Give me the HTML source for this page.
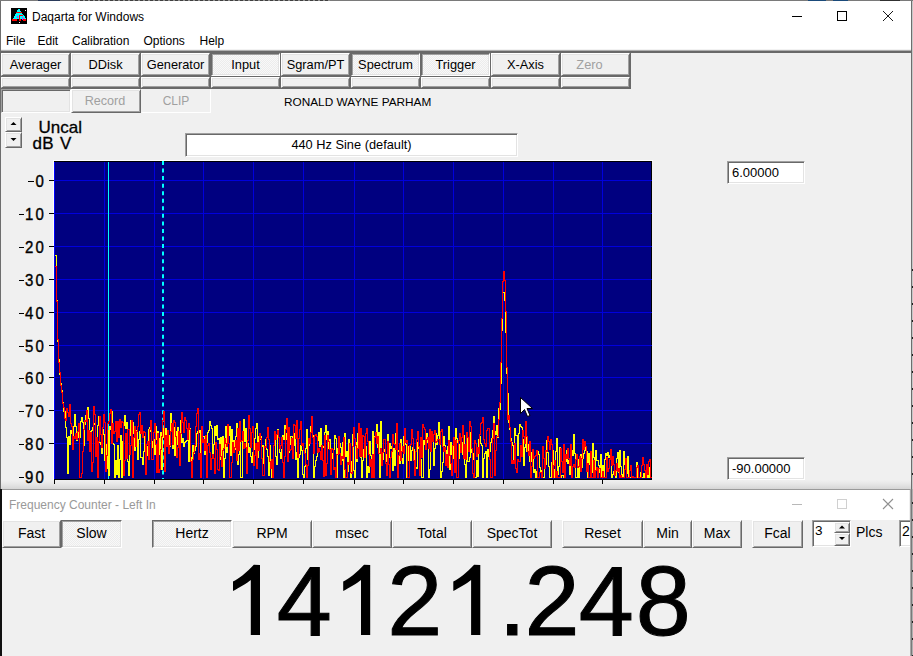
<!DOCTYPE html>
<html><head><meta charset="utf-8">
<style>
*{box-sizing:border-box;margin:0;padding:0}
html,body{width:913px;height:656px;overflow:hidden;background:#f0f0f0}
body{position:relative;font-family:"Liberation Sans",sans-serif;color:#000}
.a{position:absolute}
.t{position:absolute;white-space:nowrap;font-size:12px;line-height:14px}
/* raised button */
.btn{position:absolute;background:#f0f0f0;border-style:solid;border-width:1px;border-color:#fff #696969 #696969 #fff;box-shadow:inset 1px 1px #e3e3e3,inset -1px -1px #a0a0a0;text-align:center;font-size:12px;white-space:nowrap}
.prs{position:absolute;border-style:solid;border-width:1px;border-color:#696969 #fff #fff #696969;box-shadow:inset 1px 1px #a0a0a0,inset -1px -1px #e3e3e3;text-align:center;font-size:12px;white-space:nowrap;
 background-color:#f8f8f8;background-image:linear-gradient(45deg,#ececec 25%,transparent 25%,transparent 75%,#ececec 75%),linear-gradient(45deg,#ececec 25%,transparent 25%,transparent 75%,#ececec 75%);background-size:2px 2px;background-position:0 0,1px 1px}
.sunk{position:absolute;border-style:solid;border-width:1px;border-color:#a0a0a0 #fff #fff #a0a0a0;box-shadow:inset 1px 1px #696969,inset -1px -1px #e3e3e3;background:#fff}
.ylab{position:absolute;left:0;width:46px;text-align:right;font-size:15px;line-height:18px;-webkit-text-stroke:0.35px #000;letter-spacing:2.2px;transform-origin:0 50%;transform:scaleY(1.13)}
.dash{position:absolute;width:6px;height:1px;background:#000}
</style></head><body>

<!-- top strip (window behind) -->
<div class="a" style="left:0;top:0;width:913px;height:1px;background:#7a7a7a"></div>
<div class="a" style="left:38px;top:0;width:22px;height:1px;background:#2a3a5a"></div>
<div class="a" style="left:75px;top:0;width:255px;height:1px;background:repeating-linear-gradient(90deg,#404040 0px,#404040 3px,#909090 3px,#909090 5px)"></div>
<div class="a" style="left:808px;top:0;width:18px;height:1px;background:#1a4a7a"></div>
<div class="a" style="left:833px;top:0;width:15px;height:1px;background:#1a4a7a"></div>
<div class="a" style="left:880px;top:0;width:20px;height:1px;background:#303030"></div>

<!-- main window frame -->
<div class="a" style="left:0;top:1px;width:1px;height:488px;background:#6e6e6e"></div>
<div class="a" style="left:911px;top:1px;width:1px;height:488px;background:#6e6e6e"></div>
<div class="a" style="left:912px;top:1px;width:1px;height:488px;background:#c8c8c8"></div>
<div class="a" style="left:912px;top:255px;width:1px;height:234px;background:repeating-linear-gradient(#c8c8c8 0px,#c8c8c8 14px,#202020 14px,#202020 16px,#c8c8c8 16px,#c8c8c8 17px)"></div>

<div class="a" style="left:1px;top:480px;width:910px;height:9px;background:linear-gradient(#f0f0f0,#e8e8e8 40%,#d6d6d6)"></div>
<!-- title bar + menu -->
<div class="a" style="left:1px;top:1px;width:910px;height:49px;background:#fff"></div>
<svg class="a" style="left:11px;top:8px" width="16" height="16" viewBox="0 0 16 16" shape-rendering="crispEdges"><rect width="16" height="16" fill="#000"/><rect x="7" y="1" width="2" height="1" fill="#00ffff"/><rect x="6" y="2" width="3" height="1" fill="#00ffff"/><rect x="14" y="2" width="1" height="1" fill="#ffffff"/><rect x="6" y="3" width="4" height="1" fill="#00ffff"/><rect x="5" y="4" width="6" height="1" fill="#ff0000"/><rect x="5" y="5" width="6" height="1" fill="#00ffff"/><rect x="4" y="6" width="8" height="1" fill="#00ffff"/><rect x="4" y="7" width="4" height="1" fill="#00ffff"/><rect x="8" y="7" width="4" height="1" fill="#ff0000"/><rect x="12" y="7" width="1" height="1" fill="#00ffff"/><rect x="3" y="8" width="3" height="1" fill="#00ffff"/><rect x="6" y="8" width="1" height="1" fill="#ff00ff"/><rect x="7" y="8" width="1" height="1" fill="#00ffff"/><rect x="8" y="8" width="1" height="1" fill="#ff0000"/><rect x="9" y="8" width="5" height="1" fill="#00ffff"/><rect x="3" y="9" width="3" height="1" fill="#00ffff"/><rect x="6" y="9" width="1" height="1" fill="#ff00ff"/><rect x="7" y="9" width="1" height="1" fill="#00ffff"/><rect x="8" y="9" width="1" height="1" fill="#ff0000"/><rect x="9" y="9" width="2" height="1" fill="#00ffff"/><rect x="11" y="9" width="1" height="1" fill="#ff00ff"/><rect x="12" y="9" width="2" height="1" fill="#00ffff"/><rect x="2" y="10" width="6" height="1" fill="#00ffff"/><rect x="8" y="10" width="1" height="1" fill="#ff0000"/><rect x="9" y="10" width="3" height="1" fill="#00ffff"/><rect x="12" y="10" width="1" height="1" fill="#ff00ff"/><rect x="13" y="10" width="2" height="1" fill="#00ffff"/><rect x="1" y="11" width="5" height="1" fill="#ff0000"/><rect x="8" y="11" width="2" height="1" fill="#ff0000"/><rect x="11" y="11" width="1" height="1" fill="#ff00ff"/><rect x="12" y="11" width="3" height="1" fill="#ff0000"/><rect x="1" y="12" width="5" height="1" fill="#ff0000"/><rect x="8" y="12" width="2" height="1" fill="#ff0000"/><rect x="12" y="12" width="3" height="1" fill="#ff0000"/><rect x="8" y="14" width="1" height="1" fill="#ffffff"/></svg>
<div class="t" style="left:32px;top:10px;font-size:12px;color:#000">Daqarta for Windows</div>
<div class="a" style="left:792px;top:16px;width:10px;height:1px;background:#000"></div>
<div class="a" style="left:837px;top:11px;width:10px;height:10px;border:1px solid #000"></div>
<svg class="a" style="left:882px;top:10px" width="12" height="12" viewBox="0 0 12 12"><path d="M1 1L11 11M11 1L1 11" stroke="#000" stroke-width="0.9"/></svg>

<div class="t" style="left:6px;top:33.5px">File</div>
<div class="t" style="left:37.5px;top:33.5px">Edit</div>
<div class="t" style="left:72px;top:33.5px">Calibration</div>
<div class="t" style="left:143.5px;top:33.5px">Options</div>
<div class="t" style="left:199.5px;top:33.5px">Help</div>

<div class="a" style="left:1px;top:49px;width:910px;height:1px;background:#f2f2f2"></div>
<div class="a" style="left:1px;top:50px;width:910px;height:1px;background:#b0b0b0"></div>
<div class="a" style="left:1px;top:51px;width:910px;height:2px;background:#696969"></div>

<!-- toolbar -->
<div class="a" style="left:0;top:52px;width:631px;height:37px;background:#696969"></div>
<div class="btn" style="left:1px;top:53px;width:69px;height:23px;line-height:22px;font-size:12.8px">Averager</div>
<div class="btn" style="left:71px;top:53px;width:69px;height:23px;line-height:22px;font-size:12.8px">DDisk</div>
<div class="btn" style="left:141px;top:53px;width:69px;height:23px;line-height:22px;font-size:12.8px">Generator</div>
<div class="prs" style="left:211px;top:53px;width:69px;height:23px;line-height:22px;font-size:12.8px">Input</div>
<div class="btn" style="left:281px;top:53px;width:69px;height:23px;line-height:22px;font-size:12.8px">Sgram/PT</div>
<div class="prs" style="left:351px;top:53px;width:69px;height:23px;line-height:22px;font-size:12.8px">Spectrum</div>
<div class="prs" style="left:421px;top:53px;width:69px;height:23px;line-height:22px;font-size:12.8px">Trigger</div>
<div class="btn" style="left:491px;top:53px;width:69px;height:23px;line-height:22px;font-size:12.8px">X-Axis</div>
<div class="btn" style="left:561px;top:53px;width:69px;height:23px;line-height:22px;font-size:12.8px;color:#a0a0a0;padding-right:12px">Zero</div>

<div class="btn" style="left:1px;top:77px;width:69px;height:11px"></div>
<div class="btn" style="left:71px;top:77px;width:69px;height:11px"></div>
<div class="btn" style="left:141px;top:77px;width:69px;height:11px"></div>
<div class="btn" style="left:211px;top:77px;width:69px;height:11px"></div>
<div class="btn" style="left:281px;top:77px;width:69px;height:11px"></div>
<div class="btn" style="left:351px;top:77px;width:69px;height:11px"></div>
<div class="btn" style="left:421px;top:77px;width:69px;height:11px"></div>
<div class="btn" style="left:491px;top:77px;width:69px;height:11px"></div>
<div class="btn" style="left:561px;top:77px;width:69px;height:11px"></div>

<!-- row 3 -->
<div class="a" style="left:1px;top:89px;width:70px;height:24px;border-style:solid;border-width:1px;border-color:#a0a0a0 #fff #fff #a0a0a0;box-shadow:inset 1px 1px #696969,inset -1px -1px #e3e3e3;background:#f0f0f0"></div>
<div class="btn" style="left:71px;top:89px;width:70px;height:24px;line-height:22px;color:#a0a0a0;font-size:12.6px;padding-right:2px">Record</div>
<div class="a" style="left:141px;top:89px;width:70px;height:24px;border-style:solid;border-width:1px;border-color:#f0f0f0 #fff #fff #f0f0f0;text-align:center;line-height:22px;font-size:12px;color:#a0a0a0">CLIP</div>
<div class="t" style="left:284px;top:94.5px;font-size:11.8px">RONALD WAYNE PARHAM</div>

<!-- spin + units -->
<div class="btn" style="left:5px;top:117px;width:17px;height:15px"></div>
<div class="btn" style="left:5px;top:132px;width:17px;height:16px"></div>
<svg class="a" style="left:5px;top:117px" width="17" height="31"><path d="M8.5 5L11.5 8H5.5Z" fill="#000"/><path d="M5.5 21H11.5L8.5 24Z" fill="#000"/></svg>
<div class="t" style="left:38.5px;top:119px;font-size:17px;line-height:18px;-webkit-text-stroke:0.3px #000;letter-spacing:0px">Uncal</div>
<div class="t" style="left:32.5px;top:135px;font-size:17px;line-height:18px;-webkit-text-stroke:0.3px #000;letter-spacing:0.3px;word-spacing:1px">dB V</div>

<!-- signal name box -->
<div class="sunk" style="left:185px;top:133px;width:333px;height:24px;text-align:center;line-height:21px;font-size:12.8px">440 Hz Sine (default)</div>

<!-- plot -->
<div class="a" style="left:53px;top:160px;width:600px;height:1px;background:#fff"></div>
<div class="a" style="left:53px;top:160px;width:1px;height:320px;background:#fff"></div>
<svg class="a" style="left:0;top:0" width="913" height="500" viewBox="0 0 913 500">
 <rect x="54" y="161" width="598" height="318" fill="#000080"/>
 <rect x="54" y="161" width="598" height="1" fill="#000"/>
 <rect x="54" y="162" width="1" height="317" fill="#0000ff"/>
 <rect x="651" y="161" width="1" height="318" fill="#000"/>
 <g stroke="#0000dc" stroke-width="1"><line x1="104.5" y1="162" x2="104.5" y2="479" /><line x1="154.5" y1="162" x2="154.5" y2="479" /><line x1="203.5" y1="162" x2="203.5" y2="479" /><line x1="253.5" y1="162" x2="253.5" y2="479" /><line x1="303.5" y1="162" x2="303.5" y2="479" /><line x1="354.5" y1="162" x2="354.5" y2="479" /><line x1="403.5" y1="162" x2="403.5" y2="479" /><line x1="453.5" y1="162" x2="453.5" y2="479" /><line x1="503.5" y1="162" x2="503.5" y2="479" /><line x1="553.5" y1="162" x2="553.5" y2="479" /><line x1="602.5" y1="162" x2="602.5" y2="479" /><line x1="55" y1="180.5" x2="652" y2="180.5" /><line x1="55" y1="213.5" x2="652" y2="213.5" /><line x1="55" y1="246.5" x2="652" y2="246.5" /><line x1="55" y1="279.5" x2="652" y2="279.5" /><line x1="55" y1="312.5" x2="652" y2="312.5" /><line x1="55" y1="345.5" x2="652" y2="345.5" /><line x1="55" y1="377.5" x2="652" y2="377.5" /><line x1="55" y1="410.5" x2="652" y2="410.5" /><line x1="55" y1="443.5" x2="652" y2="443.5" /></g>
 <line x1="108.5" y1="162" x2="108.5" y2="479" stroke="#00ffff" stroke-width="1"/>
 <line x1="163" y1="161" x2="163" y2="479" stroke="#00ffff" stroke-width="2" stroke-dasharray="4,3.55"/>
 <path d="M55 255h1V256h-1ZM56 255h1V301h-1ZM57 300h1V342h-1ZM58 341h1V360h-1ZM59 359h1V375h-1ZM60 374h1V384h-1ZM61 383h1V391h-1ZM62 390h1V403h-1ZM63 402h1V412h-1ZM64 411h1V412h-1ZM65 411h1V428h-1ZM66 427h1V438h-1ZM67 437h1V474h-1ZM68 436h1V474h-1ZM69 436h1V445h-1ZM70 430h1V445h-1ZM71 430h1V434h-1ZM72 433h1V439h-1ZM73 426h1V439h-1ZM74 414h1V427h-1ZM75 414h1V427h-1ZM76 426h1V441h-1ZM77 437h1V441h-1ZM78 431h1V438h-1ZM79 431h1V438h-1ZM80 421h1V438h-1ZM81 417h1V422h-1ZM82 417h1V423h-1ZM83 422h1V446h-1ZM84 424h1V446h-1ZM85 415h1V425h-1ZM86 412h1V416h-1ZM87 407h1V413h-1ZM88 407h1V419h-1ZM89 418h1V432h-1ZM90 431h1V449h-1ZM91 430h1V449h-1ZM92 427h1V431h-1ZM93 424h1V428h-1ZM94 423h1V425h-1ZM95 423h1V444h-1ZM96 437h1V444h-1ZM97 425h1V438h-1ZM98 416h1V426h-1ZM99 416h1V443h-1ZM100 442h1V445h-1ZM101 444h1V454h-1ZM102 429h1V454h-1ZM103 429h1V435h-1ZM104 434h1V461h-1ZM105 444h1V461h-1ZM106 444h1V469h-1ZM107 430h1V469h-1ZM108 430h1V476h-1ZM109 426h1V476h-1ZM110 426h1V430h-1ZM111 411h1V430h-1ZM112 411h1V444h-1ZM113 443h1V445h-1ZM114 444h1V478h-1ZM115 460h1V478h-1ZM116 460h1V475h-1ZM117 445h1V475h-1ZM118 445h1V478h-1ZM119 459h1V478h-1ZM120 435h1V460h-1ZM121 435h1V478h-1ZM122 441h1V478h-1ZM123 425h1V442h-1ZM124 415h1V426h-1ZM125 415h1V429h-1ZM126 422h1V429h-1ZM127 422h1V462h-1ZM128 461h1V476h-1ZM129 435h1V476h-1ZM130 420h1V436h-1ZM131 420h1V433h-1ZM132 422h1V433h-1ZM133 422h1V434h-1ZM134 433h1V451h-1ZM135 430h1V451h-1ZM136 430h1V432h-1ZM137 431h1V460h-1ZM138 439h1V460h-1ZM139 431h1V440h-1ZM140 431h1V458h-1ZM141 457h1V458h-1ZM142 457h1V465h-1ZM143 451h1V465h-1ZM144 436h1V452h-1ZM145 436h1V445h-1ZM146 444h1V456h-1ZM147 446h1V456h-1ZM148 429h1V447h-1ZM149 427h1V430h-1ZM150 427h1V432h-1ZM151 431h1V448h-1ZM152 441h1V448h-1ZM153 439h1V442h-1ZM154 439h1V455h-1ZM155 426h1V455h-1ZM156 426h1V440h-1ZM157 431h1V440h-1ZM158 431h1V439h-1ZM159 438h1V455h-1ZM160 432h1V455h-1ZM161 432h1V470h-1ZM162 428h1V470h-1ZM163 428h1V438h-1ZM164 437h1V440h-1ZM165 428h1V440h-1ZM166 428h1V438h-1ZM167 436h1V438h-1ZM168 435h1V437h-1ZM169 435h1V447h-1ZM170 413h1V447h-1ZM171 413h1V428h-1ZM172 427h1V449h-1ZM173 427h1V449h-1ZM174 427h1V456h-1ZM175 431h1V456h-1ZM176 431h1V445h-1ZM177 427h1V445h-1ZM178 427h1V434h-1ZM179 433h1V435h-1ZM180 420h1V435h-1ZM181 420h1V443h-1ZM182 438h1V443h-1ZM183 438h1V447h-1ZM184 442h1V447h-1ZM185 441h1V443h-1ZM186 440h1V442h-1ZM187 432h1V441h-1ZM188 432h1V462h-1ZM189 428h1V462h-1ZM190 428h1V458h-1ZM191 457h1V464h-1ZM192 445h1V464h-1ZM193 445h1V454h-1ZM194 450h1V454h-1ZM195 446h1V451h-1ZM196 433h1V447h-1ZM197 431h1V434h-1ZM198 431h1V433h-1ZM199 430h1V433h-1ZM200 430h1V474h-1ZM201 442h1V474h-1ZM202 436h1V443h-1ZM203 436h1V437h-1ZM204 436h1V455h-1ZM205 442h1V455h-1ZM206 442h1V443h-1ZM207 432h1V443h-1ZM208 430h1V433h-1ZM209 421h1V431h-1ZM210 421h1V426h-1ZM211 425h1V429h-1ZM212 428h1V457h-1ZM213 444h1V457h-1ZM214 426h1V445h-1ZM215 426h1V436h-1ZM216 425h1V436h-1ZM217 425h1V440h-1ZM218 438h1V440h-1ZM219 438h1V460h-1ZM220 437h1V460h-1ZM221 437h1V459h-1ZM222 436h1V459h-1ZM223 436h1V478h-1ZM224 458h1V478h-1ZM225 426h1V459h-1ZM226 426h1V453h-1ZM227 436h1V453h-1ZM228 435h1V437h-1ZM229 426h1V436h-1ZM230 426h1V456h-1ZM231 429h1V456h-1ZM232 429h1V450h-1ZM233 440h1V450h-1ZM234 440h1V450h-1ZM235 436h1V450h-1ZM236 423h1V437h-1ZM237 423h1V465h-1ZM238 454h1V465h-1ZM239 433h1V455h-1ZM240 433h1V478h-1ZM241 477h1V478h-1ZM242 439h1V478h-1ZM243 419h1V440h-1ZM244 419h1V442h-1ZM245 428h1V442h-1ZM246 428h1V450h-1ZM247 443h1V450h-1ZM248 443h1V453h-1ZM249 447h1V453h-1ZM250 447h1V457h-1ZM251 456h1V463h-1ZM252 452h1V463h-1ZM253 449h1V453h-1ZM254 438h1V450h-1ZM255 428h1V439h-1ZM256 423h1V429h-1ZM257 423h1V458h-1ZM258 436h1V458h-1ZM259 436h1V440h-1ZM260 436h1V440h-1ZM261 436h1V447h-1ZM262 445h1V447h-1ZM263 445h1V464h-1ZM264 446h1V464h-1ZM265 439h1V447h-1ZM266 439h1V450h-1ZM267 449h1V457h-1ZM268 456h1V476h-1ZM269 445h1V476h-1ZM270 445h1V468h-1ZM271 467h1V478h-1ZM272 477h1V478h-1ZM273 445h1V478h-1ZM274 440h1V446h-1ZM275 440h1V457h-1ZM276 456h1V465h-1ZM277 429h1V465h-1ZM278 429h1V438h-1ZM279 437h1V453h-1ZM280 452h1V459h-1ZM281 449h1V459h-1ZM282 435h1V450h-1ZM283 435h1V440h-1ZM284 425h1V440h-1ZM285 425h1V434h-1ZM286 433h1V440h-1ZM287 439h1V461h-1ZM288 452h1V461h-1ZM289 444h1V453h-1ZM290 436h1V445h-1ZM291 436h1V437h-1ZM292 436h1V451h-1ZM293 445h1V451h-1ZM294 433h1V446h-1ZM295 433h1V460h-1ZM296 452h1V460h-1ZM297 452h1V478h-1ZM298 457h1V478h-1ZM299 454h1V458h-1ZM300 445h1V455h-1ZM301 445h1V451h-1ZM302 450h1V475h-1ZM303 474h1V478h-1ZM304 466h1V478h-1ZM305 448h1V467h-1ZM306 429h1V449h-1ZM307 429h1V460h-1ZM308 445h1V460h-1ZM309 441h1V446h-1ZM310 426h1V442h-1ZM311 421h1V427h-1ZM312 421h1V436h-1ZM313 435h1V478h-1ZM314 466h1V478h-1ZM315 460h1V467h-1ZM316 456h1V461h-1ZM317 440h1V457h-1ZM318 432h1V441h-1ZM319 432h1V447h-1ZM320 428h1V447h-1ZM321 428h1V446h-1ZM322 445h1V447h-1ZM323 446h1V448h-1ZM324 432h1V448h-1ZM325 425h1V433h-1ZM326 425h1V440h-1ZM327 431h1V440h-1ZM328 431h1V449h-1ZM329 439h1V449h-1ZM330 439h1V450h-1ZM331 449h1V459h-1ZM332 453h1V459h-1ZM333 449h1V454h-1ZM334 435h1V450h-1ZM335 435h1V439h-1ZM336 438h1V478h-1ZM337 448h1V478h-1ZM338 438h1V449h-1ZM339 438h1V444h-1ZM340 443h1V448h-1ZM341 447h1V461h-1ZM342 442h1V461h-1ZM343 442h1V478h-1ZM344 433h1V478h-1ZM345 433h1V457h-1ZM346 451h1V457h-1ZM347 451h1V472h-1ZM348 439h1V472h-1ZM349 439h1V453h-1ZM350 452h1V478h-1ZM351 461h1V478h-1ZM352 434h1V462h-1ZM353 434h1V471h-1ZM354 470h1V478h-1ZM355 442h1V478h-1ZM356 442h1V462h-1ZM357 433h1V462h-1ZM358 426h1V434h-1ZM359 426h1V456h-1ZM360 455h1V458h-1ZM361 457h1V478h-1ZM362 460h1V478h-1ZM363 449h1V461h-1ZM364 438h1V450h-1ZM365 438h1V447h-1ZM366 446h1V478h-1ZM367 466h1V478h-1ZM368 466h1V473h-1ZM369 441h1V473h-1ZM370 441h1V456h-1ZM371 455h1V459h-1ZM372 431h1V459h-1ZM373 431h1V459h-1ZM374 436h1V459h-1ZM375 433h1V437h-1ZM376 424h1V434h-1ZM377 424h1V448h-1ZM378 432h1V448h-1ZM379 432h1V478h-1ZM380 421h1V478h-1ZM381 421h1V455h-1ZM382 454h1V460h-1ZM383 451h1V460h-1ZM384 449h1V452h-1ZM385 449h1V462h-1ZM386 454h1V462h-1ZM387 434h1V455h-1ZM388 434h1V458h-1ZM389 443h1V458h-1ZM390 443h1V449h-1ZM391 446h1V449h-1ZM392 446h1V471h-1ZM393 448h1V471h-1ZM394 448h1V466h-1ZM395 433h1V466h-1ZM396 433h1V437h-1ZM397 436h1V451h-1ZM398 450h1V452h-1ZM399 451h1V464h-1ZM400 439h1V464h-1ZM401 439h1V459h-1ZM402 458h1V464h-1ZM403 436h1V464h-1ZM404 429h1V437h-1ZM405 429h1V445h-1ZM406 444h1V478h-1ZM407 460h1V478h-1ZM408 446h1V461h-1ZM409 445h1V447h-1ZM410 445h1V461h-1ZM411 450h1V461h-1ZM412 447h1V451h-1ZM413 447h1V450h-1ZM414 449h1V476h-1ZM415 467h1V476h-1ZM416 467h1V469h-1ZM417 442h1V469h-1ZM418 442h1V449h-1ZM419 448h1V463h-1ZM420 459h1V463h-1ZM421 459h1V478h-1ZM422 477h1V478h-1ZM423 440h1V478h-1ZM424 440h1V445h-1ZM425 439h1V445h-1ZM426 433h1V440h-1ZM427 433h1V443h-1ZM428 442h1V478h-1ZM429 469h1V478h-1ZM430 435h1V470h-1ZM431 433h1V436h-1ZM432 433h1V438h-1ZM433 437h1V466h-1ZM434 448h1V466h-1ZM435 433h1V449h-1ZM436 433h1V445h-1ZM437 435h1V445h-1ZM438 422h1V436h-1ZM439 422h1V444h-1ZM440 443h1V478h-1ZM441 471h1V478h-1ZM442 462h1V472h-1ZM443 436h1V463h-1ZM444 436h1V446h-1ZM445 445h1V451h-1ZM446 450h1V459h-1ZM447 446h1V459h-1ZM448 426h1V447h-1ZM449 426h1V470h-1ZM450 442h1V470h-1ZM451 442h1V455h-1ZM452 446h1V455h-1ZM453 446h1V459h-1ZM454 442h1V459h-1ZM455 428h1V443h-1ZM456 428h1V439h-1ZM457 438h1V443h-1ZM458 442h1V459h-1ZM459 444h1V459h-1ZM460 444h1V452h-1ZM461 442h1V452h-1ZM462 442h1V455h-1ZM463 435h1V455h-1ZM464 435h1V465h-1ZM465 464h1V478h-1ZM466 432h1V478h-1ZM467 432h1V462h-1ZM468 461h1V462h-1ZM469 457h1V462h-1ZM470 432h1V458h-1ZM471 432h1V453h-1ZM472 452h1V460h-1ZM473 453h1V460h-1ZM474 453h1V478h-1ZM475 477h1V478h-1ZM476 460h1V478h-1ZM477 460h1V477h-1ZM478 439h1V477h-1ZM479 436h1V440h-1ZM480 436h1V444h-1ZM481 443h1V446h-1ZM482 445h1V478h-1ZM483 458h1V478h-1ZM484 453h1V459h-1ZM485 451h1V454h-1ZM486 451h1V478h-1ZM487 449h1V478h-1ZM488 449h1V457h-1ZM489 451h1V457h-1ZM490 442h1V452h-1ZM491 438h1V443h-1ZM492 430h1V439h-1ZM493 416h1V431h-1ZM494 416h1V432h-1ZM495 431h1V435h-1ZM496 425h1V435h-1ZM497 425h1V438h-1ZM498 408h1V438h-1ZM499 408h1V410h-1ZM500 383h1V410h-1ZM501 330h1V384h-1ZM502 292h1V331h-1ZM503 292h1V293h-1ZM504 292h1V301h-1ZM505 300h1V333h-1ZM506 332h1V374h-1ZM507 373h1V394h-1ZM508 393h1V423h-1ZM509 422h1V430h-1ZM510 429h1V439h-1ZM511 438h1V443h-1ZM512 442h1V446h-1ZM513 445h1V462h-1ZM514 428h1V462h-1ZM515 428h1V436h-1ZM516 435h1V436h-1ZM517 435h1V456h-1ZM518 433h1V456h-1ZM519 424h1V434h-1ZM520 424h1V427h-1ZM521 426h1V428h-1ZM522 427h1V440h-1ZM523 439h1V466h-1ZM524 447h1V466h-1ZM525 433h1V448h-1ZM526 433h1V452h-1ZM527 444h1V452h-1ZM528 444h1V452h-1ZM529 451h1V462h-1ZM530 452h1V462h-1ZM531 452h1V462h-1ZM532 459h1V462h-1ZM533 459h1V473h-1ZM534 469h1V473h-1ZM535 469h1V478h-1ZM536 471h1V478h-1ZM537 451h1V472h-1ZM538 451h1V455h-1ZM539 454h1V468h-1ZM540 467h1V473h-1ZM541 470h1V473h-1ZM542 470h1V478h-1ZM543 477h1V478h-1ZM544 463h1V478h-1ZM545 463h1V465h-1ZM546 440h1V465h-1ZM547 440h1V453h-1ZM548 452h1V467h-1ZM549 466h1V478h-1ZM550 477h1V478h-1ZM551 462h1V478h-1ZM552 450h1V463h-1ZM553 450h1V478h-1ZM554 469h1V478h-1ZM555 451h1V470h-1ZM556 438h1V452h-1ZM557 438h1V475h-1ZM558 466h1V475h-1ZM559 447h1V467h-1ZM560 447h1V478h-1ZM561 475h1V478h-1ZM562 475h1V476h-1ZM563 475h1V478h-1ZM564 457h1V478h-1ZM565 457h1V462h-1ZM566 450h1V462h-1ZM567 450h1V464h-1ZM568 460h1V464h-1ZM569 460h1V475h-1ZM570 451h1V475h-1ZM571 450h1V452h-1ZM572 450h1V456h-1ZM573 434h1V456h-1ZM574 434h1V454h-1ZM575 453h1V478h-1ZM576 477h1V478h-1ZM577 459h1V478h-1ZM578 459h1V478h-1ZM579 458h1V478h-1ZM580 454h1V459h-1ZM581 454h1V468h-1ZM582 458h1V468h-1ZM583 453h1V459h-1ZM584 447h1V454h-1ZM585 447h1V451h-1ZM586 450h1V452h-1ZM587 451h1V478h-1ZM588 453h1V478h-1ZM589 453h1V465h-1ZM590 456h1V465h-1ZM591 456h1V473h-1ZM592 443h1V473h-1ZM593 443h1V458h-1ZM594 457h1V475h-1ZM595 450h1V475h-1ZM596 450h1V461h-1ZM597 460h1V461h-1ZM598 460h1V466h-1ZM599 465h1V473h-1ZM600 454h1V473h-1ZM601 454h1V478h-1ZM602 465h1V478h-1ZM603 465h1V478h-1ZM604 459h1V478h-1ZM605 453h1V460h-1ZM606 453h1V456h-1ZM607 452h1V456h-1ZM608 452h1V458h-1ZM609 455h1V458h-1ZM610 452h1V456h-1ZM611 452h1V478h-1ZM612 474h1V478h-1ZM613 471h1V475h-1ZM614 471h1V472h-1ZM615 471h1V478h-1ZM616 458h1V478h-1ZM617 452h1V459h-1ZM618 452h1V473h-1ZM619 450h1V473h-1ZM620 450h1V467h-1ZM621 466h1V475h-1ZM622 474h1V478h-1ZM623 451h1V478h-1ZM624 451h1V465h-1ZM625 464h1V466h-1ZM626 465h1V474h-1ZM627 456h1V474h-1ZM628 456h1V478h-1ZM629 477h1V478h-1ZM630 477h1V478h-1ZM631 477h1V478h-1ZM632 477h1V478h-1ZM633 477h1V478h-1ZM634 477h1V478h-1ZM635 477h1V478h-1ZM636 462h1V478h-1ZM637 462h1V478h-1ZM638 477h1V478h-1ZM639 477h1V478h-1ZM640 472h1V478h-1ZM641 472h1V478h-1ZM642 477h1V478h-1ZM643 473h1V478h-1ZM644 473h1V478h-1ZM645 471h1V478h-1ZM646 468h1V472h-1ZM647 468h1V478h-1ZM648 467h1V478h-1ZM649 467h1V478h-1ZM650 477h1V478h-1ZM651 477h1V478h-1Z" fill="#ffff00" shape-rendering="crispEdges"/>
 <path d="M55 266h1V267h-1ZM56 266h1V302h-1ZM57 301h1V340h-1ZM58 339h1V363h-1ZM59 362h1V373h-1ZM60 372h1V386h-1ZM61 385h1V393h-1ZM62 392h1V404h-1ZM63 403h1V408h-1ZM64 407h1V419h-1ZM65 418h1V421h-1ZM66 408h1V421h-1ZM67 408h1V413h-1ZM68 412h1V417h-1ZM69 404h1V417h-1ZM70 404h1V424h-1ZM71 423h1V427h-1ZM72 426h1V450h-1ZM73 436h1V450h-1ZM74 436h1V439h-1ZM75 433h1V439h-1ZM76 433h1V440h-1ZM77 431h1V440h-1ZM78 423h1V432h-1ZM79 423h1V478h-1ZM80 477h1V478h-1ZM81 473h1V478h-1ZM82 451h1V474h-1ZM83 429h1V452h-1ZM84 420h1V430h-1ZM85 420h1V422h-1ZM86 410h1V422h-1ZM87 410h1V441h-1ZM88 430h1V441h-1ZM89 430h1V452h-1ZM90 432h1V452h-1ZM91 432h1V472h-1ZM92 462h1V472h-1ZM93 406h1V463h-1ZM94 406h1V415h-1ZM95 414h1V457h-1ZM96 437h1V457h-1ZM97 437h1V478h-1ZM98 441h1V478h-1ZM99 416h1V442h-1ZM100 416h1V435h-1ZM101 434h1V448h-1ZM102 427h1V448h-1ZM103 414h1V428h-1ZM104 414h1V423h-1ZM105 422h1V472h-1ZM106 455h1V472h-1ZM107 423h1V456h-1ZM108 421h1V424h-1ZM109 413h1V422h-1ZM110 409h1V414h-1ZM111 409h1V444h-1ZM112 423h1V444h-1ZM113 423h1V434h-1ZM114 431h1V434h-1ZM115 421h1V432h-1ZM116 421h1V442h-1ZM117 421h1V442h-1ZM118 421h1V438h-1ZM119 419h1V438h-1ZM120 419h1V428h-1ZM121 421h1V428h-1ZM122 421h1V423h-1ZM123 422h1V476h-1ZM124 460h1V476h-1ZM125 433h1V461h-1ZM126 433h1V459h-1ZM127 429h1V459h-1ZM128 429h1V430h-1ZM129 429h1V455h-1ZM130 445h1V455h-1ZM131 420h1V446h-1ZM132 420h1V478h-1ZM133 437h1V478h-1ZM134 426h1V438h-1ZM135 426h1V447h-1ZM136 431h1V447h-1ZM137 426h1V432h-1ZM138 414h1V427h-1ZM139 412h1V415h-1ZM140 412h1V434h-1ZM141 425h1V434h-1ZM142 425h1V438h-1ZM143 431h1V438h-1ZM144 431h1V433h-1ZM145 432h1V475h-1ZM146 444h1V475h-1ZM147 441h1V445h-1ZM148 441h1V460h-1ZM149 429h1V460h-1ZM150 420h1V430h-1ZM151 420h1V460h-1ZM152 459h1V460h-1ZM153 432h1V460h-1ZM154 423h1V433h-1ZM155 423h1V445h-1ZM156 444h1V473h-1ZM157 433h1V473h-1ZM158 433h1V473h-1ZM159 469h1V473h-1ZM160 449h1V470h-1ZM161 436h1V450h-1ZM162 420h1V437h-1ZM163 411h1V421h-1ZM164 411h1V472h-1ZM165 435h1V472h-1ZM166 435h1V447h-1ZM167 430h1V447h-1ZM168 430h1V454h-1ZM169 445h1V454h-1ZM170 431h1V446h-1ZM171 423h1V432h-1ZM172 423h1V445h-1ZM173 420h1V445h-1ZM174 420h1V423h-1ZM175 422h1V437h-1ZM176 436h1V458h-1ZM177 447h1V458h-1ZM178 431h1V448h-1ZM179 431h1V466h-1ZM180 433h1V466h-1ZM181 412h1V434h-1ZM182 412h1V423h-1ZM183 422h1V433h-1ZM184 417h1V433h-1ZM185 417h1V421h-1ZM186 420h1V429h-1ZM187 428h1V440h-1ZM188 423h1V440h-1ZM189 423h1V430h-1ZM190 429h1V462h-1ZM191 461h1V478h-1ZM192 459h1V478h-1ZM193 452h1V460h-1ZM194 445h1V453h-1ZM195 426h1V446h-1ZM196 413h1V427h-1ZM197 408h1V414h-1ZM198 408h1V460h-1ZM199 453h1V460h-1ZM200 453h1V478h-1ZM201 426h1V478h-1ZM202 426h1V443h-1ZM203 439h1V443h-1ZM204 439h1V451h-1ZM205 435h1V451h-1ZM206 435h1V478h-1ZM207 445h1V478h-1ZM208 443h1V446h-1ZM209 443h1V453h-1ZM210 452h1V470h-1ZM211 458h1V470h-1ZM212 454h1V459h-1ZM213 454h1V459h-1ZM214 458h1V474h-1ZM215 442h1V474h-1ZM216 442h1V450h-1ZM217 449h1V470h-1ZM218 469h1V471h-1ZM219 444h1V471h-1ZM220 444h1V457h-1ZM221 456h1V467h-1ZM222 450h1V467h-1ZM223 448h1V451h-1ZM224 438h1V449h-1ZM225 438h1V444h-1ZM226 443h1V447h-1ZM227 424h1V447h-1ZM228 424h1V444h-1ZM229 443h1V478h-1ZM230 477h1V478h-1ZM231 462h1V478h-1ZM232 442h1V463h-1ZM233 442h1V453h-1ZM234 447h1V453h-1ZM235 440h1V448h-1ZM236 440h1V461h-1ZM237 428h1V461h-1ZM238 428h1V451h-1ZM239 421h1V451h-1ZM240 421h1V442h-1ZM241 440h1V442h-1ZM242 431h1V441h-1ZM243 431h1V449h-1ZM244 443h1V449h-1ZM245 443h1V448h-1ZM246 447h1V474h-1ZM247 440h1V474h-1ZM248 415h1V441h-1ZM249 415h1V429h-1ZM250 428h1V448h-1ZM251 432h1V448h-1ZM252 426h1V433h-1ZM253 426h1V466h-1ZM254 455h1V466h-1ZM255 443h1V456h-1ZM256 443h1V469h-1ZM257 442h1V469h-1ZM258 442h1V451h-1ZM259 433h1V451h-1ZM260 433h1V439h-1ZM261 438h1V459h-1ZM262 458h1V476h-1ZM263 475h1V476h-1ZM264 446h1V476h-1ZM265 446h1V448h-1ZM266 437h1V448h-1ZM267 427h1V438h-1ZM268 427h1V440h-1ZM269 439h1V462h-1ZM270 461h1V469h-1ZM271 459h1V469h-1ZM272 459h1V478h-1ZM273 445h1V478h-1ZM274 431h1V446h-1ZM275 431h1V440h-1ZM276 434h1V440h-1ZM277 430h1V435h-1ZM278 430h1V438h-1ZM279 437h1V449h-1ZM280 445h1V449h-1ZM281 437h1V446h-1ZM282 437h1V463h-1ZM283 462h1V478h-1ZM284 456h1V478h-1ZM285 429h1V457h-1ZM286 418h1V430h-1ZM287 418h1V462h-1ZM288 427h1V462h-1ZM289 427h1V451h-1ZM290 449h1V451h-1ZM291 438h1V450h-1ZM292 438h1V459h-1ZM293 424h1V459h-1ZM294 424h1V426h-1ZM295 425h1V439h-1ZM296 420h1V439h-1ZM297 420h1V458h-1ZM298 438h1V458h-1ZM299 429h1V439h-1ZM300 421h1V430h-1ZM301 421h1V446h-1ZM302 443h1V446h-1ZM303 443h1V451h-1ZM304 450h1V454h-1ZM305 453h1V465h-1ZM306 464h1V478h-1ZM307 465h1V478h-1ZM308 438h1V466h-1ZM309 438h1V444h-1ZM310 432h1V444h-1ZM311 416h1V433h-1ZM312 416h1V438h-1ZM313 437h1V454h-1ZM314 435h1V454h-1ZM315 434h1V436h-1ZM316 434h1V437h-1ZM317 436h1V453h-1ZM318 448h1V453h-1ZM319 448h1V452h-1ZM320 451h1V460h-1ZM321 445h1V460h-1ZM322 445h1V461h-1ZM323 460h1V477h-1ZM324 435h1V477h-1ZM325 435h1V476h-1ZM326 463h1V476h-1ZM327 435h1V464h-1ZM328 435h1V442h-1ZM329 441h1V450h-1ZM330 449h1V475h-1ZM331 448h1V475h-1ZM332 448h1V450h-1ZM333 449h1V470h-1ZM334 467h1V470h-1ZM335 467h1V478h-1ZM336 454h1V478h-1ZM337 454h1V455h-1ZM338 436h1V455h-1ZM339 436h1V454h-1ZM340 453h1V465h-1ZM341 456h1V465h-1ZM342 456h1V459h-1ZM343 437h1V459h-1ZM344 437h1V470h-1ZM345 469h1V478h-1ZM346 477h1V478h-1ZM347 462h1V478h-1ZM348 462h1V465h-1ZM349 443h1V465h-1ZM350 443h1V473h-1ZM351 472h1V474h-1ZM352 446h1V474h-1ZM353 427h1V447h-1ZM354 427h1V439h-1ZM355 438h1V446h-1ZM356 445h1V459h-1ZM357 448h1V459h-1ZM358 423h1V449h-1ZM359 423h1V457h-1ZM360 428h1V457h-1ZM361 428h1V457h-1ZM362 435h1V457h-1ZM363 435h1V437h-1ZM364 436h1V458h-1ZM365 433h1V458h-1ZM366 428h1V434h-1ZM367 428h1V442h-1ZM368 441h1V455h-1ZM369 454h1V467h-1ZM370 459h1V467h-1ZM371 459h1V478h-1ZM372 454h1V478h-1ZM373 454h1V478h-1ZM374 437h1V478h-1ZM375 432h1V438h-1ZM376 432h1V444h-1ZM377 436h1V444h-1ZM378 436h1V454h-1ZM379 453h1V454h-1ZM380 448h1V454h-1ZM381 448h1V466h-1ZM382 452h1V466h-1ZM383 439h1V453h-1ZM384 439h1V440h-1ZM385 439h1V464h-1ZM386 463h1V476h-1ZM387 441h1V476h-1ZM388 441h1V465h-1ZM389 464h1V478h-1ZM390 457h1V478h-1ZM391 451h1V458h-1ZM392 434h1V452h-1ZM393 434h1V444h-1ZM394 443h1V445h-1ZM395 444h1V450h-1ZM396 423h1V450h-1ZM397 423h1V478h-1ZM398 455h1V478h-1ZM399 443h1V456h-1ZM400 443h1V461h-1ZM401 451h1V461h-1ZM402 446h1V452h-1ZM403 446h1V454h-1ZM404 428h1V454h-1ZM405 428h1V443h-1ZM406 440h1V443h-1ZM407 440h1V478h-1ZM408 477h1V478h-1ZM409 445h1V478h-1ZM410 444h1V446h-1ZM411 429h1V445h-1ZM412 429h1V439h-1ZM413 438h1V461h-1ZM414 460h1V476h-1ZM415 451h1V476h-1ZM416 439h1V452h-1ZM417 431h1V440h-1ZM418 431h1V447h-1ZM419 446h1V476h-1ZM420 437h1V476h-1ZM421 437h1V458h-1ZM422 424h1V458h-1ZM423 424h1V428h-1ZM424 427h1V430h-1ZM425 429h1V450h-1ZM426 439h1V450h-1ZM427 437h1V440h-1ZM428 437h1V449h-1ZM429 429h1V449h-1ZM430 429h1V452h-1ZM431 431h1V452h-1ZM432 431h1V442h-1ZM433 434h1V442h-1ZM434 430h1V435h-1ZM435 430h1V443h-1ZM436 441h1V443h-1ZM437 439h1V442h-1ZM438 439h1V440h-1ZM439 439h1V445h-1ZM440 431h1V445h-1ZM441 429h1V432h-1ZM442 429h1V447h-1ZM443 446h1V452h-1ZM444 447h1V452h-1ZM445 447h1V466h-1ZM446 454h1V466h-1ZM447 454h1V468h-1ZM448 440h1V468h-1ZM449 440h1V456h-1ZM450 455h1V464h-1ZM451 463h1V476h-1ZM452 445h1V476h-1ZM453 437h1V446h-1ZM454 437h1V473h-1ZM455 440h1V473h-1ZM456 440h1V478h-1ZM457 477h1V478h-1ZM458 440h1V478h-1ZM459 433h1V441h-1ZM460 433h1V453h-1ZM461 437h1V453h-1ZM462 425h1V438h-1ZM463 425h1V459h-1ZM464 444h1V459h-1ZM465 444h1V460h-1ZM466 432h1V460h-1ZM467 432h1V438h-1ZM468 437h1V452h-1ZM469 421h1V452h-1ZM470 421h1V427h-1ZM471 426h1V449h-1ZM472 448h1V474h-1ZM473 473h1V478h-1ZM474 440h1V478h-1ZM475 440h1V444h-1ZM476 443h1V457h-1ZM477 447h1V457h-1ZM478 447h1V454h-1ZM479 434h1V454h-1ZM480 423h1V435h-1ZM481 422h1V424h-1ZM482 417h1V423h-1ZM483 417h1V440h-1ZM484 439h1V444h-1ZM485 443h1V447h-1ZM486 430h1V447h-1ZM487 428h1V431h-1ZM488 428h1V429h-1ZM489 428h1V460h-1ZM490 459h1V478h-1ZM491 477h1V478h-1ZM492 438h1V478h-1ZM493 423h1V439h-1ZM494 423h1V476h-1ZM495 450h1V476h-1ZM496 436h1V451h-1ZM497 436h1V437h-1ZM498 419h1V437h-1ZM499 402h1V420h-1ZM500 362h1V403h-1ZM501 318h1V363h-1ZM502 281h1V319h-1ZM503 271h1V282h-1ZM504 271h1V281h-1ZM505 280h1V312h-1ZM506 311h1V368h-1ZM507 367h1V420h-1ZM508 415h1V420h-1ZM509 415h1V428h-1ZM510 427h1V442h-1ZM511 441h1V464h-1ZM512 460h1V464h-1ZM513 460h1V464h-1ZM514 443h1V464h-1ZM515 443h1V469h-1ZM516 468h1V473h-1ZM517 459h1V473h-1ZM518 459h1V462h-1ZM519 461h1V462h-1ZM520 445h1V462h-1ZM521 445h1V457h-1ZM522 430h1V457h-1ZM523 430h1V437h-1ZM524 436h1V444h-1ZM525 421h1V444h-1ZM526 421h1V437h-1ZM527 436h1V452h-1ZM528 451h1V456h-1ZM529 441h1V456h-1ZM530 441h1V478h-1ZM531 466h1V478h-1ZM532 449h1V467h-1ZM533 449h1V459h-1ZM534 456h1V459h-1ZM535 455h1V457h-1ZM536 450h1V456h-1ZM537 450h1V478h-1ZM538 477h1V478h-1ZM539 472h1V478h-1ZM540 472h1V473h-1ZM541 472h1V478h-1ZM542 446h1V478h-1ZM543 446h1V459h-1ZM544 458h1V469h-1ZM545 450h1V469h-1ZM546 450h1V452h-1ZM547 436h1V452h-1ZM548 436h1V442h-1ZM549 441h1V450h-1ZM550 439h1V450h-1ZM551 439h1V445h-1ZM552 444h1V478h-1ZM553 465h1V478h-1ZM554 460h1V466h-1ZM555 460h1V478h-1ZM556 471h1V478h-1ZM557 471h1V478h-1ZM558 477h1V478h-1ZM559 477h1V478h-1ZM560 448h1V478h-1ZM561 448h1V462h-1ZM562 461h1V473h-1ZM563 444h1V473h-1ZM564 444h1V478h-1ZM565 454h1V478h-1ZM566 454h1V459h-1ZM567 448h1V459h-1ZM568 448h1V459h-1ZM569 458h1V466h-1ZM570 444h1V466h-1ZM571 444h1V478h-1ZM572 466h1V478h-1ZM573 464h1V467h-1ZM574 464h1V468h-1ZM575 459h1V468h-1ZM576 454h1V460h-1ZM577 454h1V468h-1ZM578 466h1V468h-1ZM579 456h1V467h-1ZM580 456h1V472h-1ZM581 458h1V472h-1ZM582 439h1V459h-1ZM583 439h1V450h-1ZM584 441h1V450h-1ZM585 441h1V447h-1ZM586 446h1V472h-1ZM587 463h1V472h-1ZM588 463h1V478h-1ZM589 477h1V478h-1ZM590 451h1V478h-1ZM591 451h1V478h-1ZM592 477h1V478h-1ZM593 460h1V478h-1ZM594 460h1V478h-1ZM595 470h1V478h-1ZM596 467h1V471h-1ZM597 467h1V478h-1ZM598 468h1V478h-1ZM599 468h1V469h-1ZM600 468h1V478h-1ZM601 477h1V478h-1ZM602 471h1V478h-1ZM603 471h1V478h-1ZM604 477h1V478h-1ZM605 477h1V478h-1ZM606 457h1V478h-1ZM607 457h1V472h-1ZM608 468h1V472h-1ZM609 459h1V469h-1ZM610 449h1V460h-1ZM611 449h1V466h-1ZM612 456h1V466h-1ZM613 456h1V465h-1ZM614 464h1V476h-1ZM615 470h1V476h-1ZM616 463h1V471h-1ZM617 463h1V472h-1ZM618 468h1V472h-1ZM619 468h1V478h-1ZM620 475h1V478h-1ZM621 475h1V478h-1ZM622 477h1V478h-1ZM623 477h1V478h-1ZM624 469h1V478h-1ZM625 458h1V470h-1ZM626 458h1V478h-1ZM627 477h1V478h-1ZM628 477h1V478h-1ZM629 470h1V478h-1ZM630 465h1V471h-1ZM631 465h1V478h-1ZM632 476h1V478h-1ZM633 476h1V478h-1ZM634 477h1V478h-1ZM635 477h1V478h-1ZM636 467h1V478h-1ZM637 465h1V468h-1ZM638 465h1V478h-1ZM639 477h1V478h-1ZM640 477h1V478h-1ZM641 465h1V478h-1ZM642 457h1V466h-1ZM643 457h1V465h-1ZM644 464h1V471h-1ZM645 470h1V478h-1ZM646 464h1V478h-1ZM647 464h1V475h-1ZM648 461h1V475h-1ZM649 459h1V462h-1ZM650 459h1V478h-1ZM651 477h1V478h-1Z" fill="#ff0000" shape-rendering="crispEdges"/>
 <rect x="54" y="479" width="598" height="1" fill="#000"/>
 <g stroke="#000" stroke-width="1"><line x1="49" y1="180.5" x2="54" y2="180.5" /><line x1="49" y1="213.5" x2="54" y2="213.5" /><line x1="49" y1="246.5" x2="54" y2="246.5" /><line x1="49" y1="279.5" x2="54" y2="279.5" /><line x1="49" y1="312.5" x2="54" y2="312.5" /><line x1="49" y1="345.5" x2="54" y2="345.5" /><line x1="49" y1="377.5" x2="54" y2="377.5" /><line x1="49" y1="410.5" x2="54" y2="410.5" /><line x1="49" y1="443.5" x2="54" y2="443.5" /><line x1="54.5" y1="479" x2="54.5" y2="484" /><line x1="104.5" y1="479" x2="104.5" y2="484" /><line x1="154.5" y1="479" x2="154.5" y2="484" /><line x1="203.5" y1="479" x2="203.5" y2="484" /><line x1="253.5" y1="479" x2="253.5" y2="484" /><line x1="303.5" y1="479" x2="303.5" y2="484" /><line x1="354.5" y1="479" x2="354.5" y2="484" /><line x1="403.5" y1="479" x2="403.5" y2="484" /><line x1="453.5" y1="479" x2="453.5" y2="484" /><line x1="503.5" y1="479" x2="503.5" y2="484" /><line x1="553.5" y1="479" x2="553.5" y2="484" /><line x1="602.5" y1="479" x2="602.5" y2="484" /></g>
 <path d="M520.5 397.5V413.5L524.5 409.5L527.5 416.5L530 415.5L527 408.5H532.5Z" fill="#fff" stroke="#000" stroke-width="1"/>
</svg>
<div class="ylab" style="top:171.5px">0</div><div class="dash" style="left:28px;top:181px;width:6px"></div><div class="ylab" style="top:204.5px">10</div><div class="dash" style="left:19px;top:214px;width:5px"></div><div class="ylab" style="top:237.5px">20</div><div class="dash" style="left:19px;top:247px;width:5px"></div><div class="ylab" style="top:270.5px">30</div><div class="dash" style="left:19px;top:280px;width:5px"></div><div class="ylab" style="top:303.5px">40</div><div class="dash" style="left:19px;top:313px;width:5px"></div><div class="ylab" style="top:336.5px">50</div><div class="dash" style="left:19px;top:346px;width:5px"></div><div class="ylab" style="top:368.5px">60</div><div class="dash" style="left:19px;top:378px;width:5px"></div><div class="ylab" style="top:401.5px">70</div><div class="dash" style="left:19px;top:411px;width:5px"></div><div class="ylab" style="top:434.5px">80</div><div class="dash" style="left:19px;top:444px;width:5px"></div><div class="ylab" style="top:467.5px">90</div><div class="dash" style="left:19px;top:477px;width:5px"></div>

<!-- value boxes -->
<div class="sunk" style="left:727px;top:161px;width:78px;height:23px;font-size:13px;line-height:21px;padding-left:4px">6.00000</div>
<div class="sunk" style="left:727px;top:457px;width:78px;height:23px;font-size:13px;line-height:21px;padding-left:4px">-90.00000</div>

<!-- shadow band above freq counter -->
<div class="a" style="left:0;top:489px;width:913px;height:1px;background:#9a9a9a"></div>

<!-- frequency counter window -->
<div class="a" style="left:0;top:489px;width:2px;height:167px;background:#101010"></div>
<div class="a" style="left:2px;top:490px;width:907px;height:30px;background:#fff"></div>
<div class="t" style="left:9px;top:498px;font-size:12px;color:#999">Frequency Counter - Left In</div>
<div class="a" style="left:792px;top:504px;width:10px;height:1px;background:#b8b8b8"></div>
<div class="a" style="left:837px;top:499px;width:10px;height:10px;border:1px solid #d0d0d0"></div>
<svg class="a" style="left:882px;top:498px" width="12" height="12" viewBox="0 0 12 12"><path d="M1 1L11 11M11 1L1 11" stroke="#909090" stroke-width="1.1"/></svg>
<div class="a" style="left:910px;top:489px;width:3px;height:167px;background:linear-gradient(90deg,#a8a8a8 0px,#a8a8a8 1px,#7a7a7a 1px,#7a7a7a 2px,transparent 2px);z-index:5"></div>
<div class="a" style="left:912px;top:489px;width:1px;height:167px;z-index:5;background:repeating-linear-gradient(#b0b0b0 0px,#b0b0b0 13px,#202020 13px,#202020 15px,#b0b0b0 15px,#b0b0b0 17px)"></div>

<div class="btn" style="left:2px;top:520px;width:59px;height:28px;line-height:25px;font-size:14px">Fast</div>
<div class="prs" style="left:61px;top:520px;width:61px;height:28px;line-height:25px;font-size:14px">Slow</div>
<div class="prs" style="left:152px;top:520px;width:80px;height:28px;line-height:25px;font-size:14px">Hertz</div>
<div class="btn" style="left:232px;top:520px;width:80px;height:28px;line-height:25px;font-size:14px">RPM</div>
<div class="btn" style="left:312px;top:520px;width:80px;height:28px;line-height:25px;font-size:14px">msec</div>
<div class="btn" style="left:392px;top:520px;width:80px;height:28px;line-height:25px;font-size:14px">Total</div>
<div class="btn" style="left:472px;top:520px;width:80px;height:28px;line-height:25px;font-size:14px">SpecTot</div>
<div class="btn" style="left:562px;top:520px;width:81px;height:28px;line-height:25px;font-size:14px">Reset</div>
<div class="btn" style="left:643px;top:520px;width:49px;height:28px;line-height:25px;font-size:14px">Min</div>
<div class="btn" style="left:692px;top:520px;width:50px;height:28px;line-height:25px;font-size:14px">Max</div>
<div class="btn" style="left:752px;top:520px;width:51px;height:28px;line-height:25px;font-size:14px">Fcal</div>
<div class="sunk" style="left:812px;top:520px;width:39px;height:27px;font-size:13.5px;line-height:19px;padding-left:2px">3</div>
<div class="btn" style="left:834px;top:522px;width:16px;height:11px"></div>
<div class="btn" style="left:834px;top:533px;width:16px;height:13px"></div>
<svg class="a" style="left:834px;top:522px" width="16" height="24"><path d="M8 3.5L11 6.5H5Z" fill="#000"/><path d="M5 15H11L8 18Z" fill="#000"/></svg>
<div class="t" style="left:856px;top:524px;font-size:14px;line-height:16px">Plcs</div>
<div class="sunk" style="left:899px;top:520px;width:14px;height:27px;font-size:14px;line-height:21px;padding-left:2px">2</div>

<div class="a" style="left:0;top:546px;width:913px;height:110px;font-size:99px;line-height:110px;-webkit-text-stroke:1px #000;color:#000"><div class="a" style="left:276.80px;top:0">4</div><div class="a" style="left:387.15px;top:0">2</div><div class="a" style="left:498.40px;top:0">.</div><div class="a" style="left:524.45px;top:0">2</div><div class="a" style="left:578.65px;top:0">4</div><div class="a" style="left:635.85px;top:0">8</div></div>
<svg class="a" style="left:0;top:0" width="913" height="656"><g fill="#000"><path transform="translate(0.0 0)" d="M260 565L260 635L250.8 635L250.8 580C248 582.5 238 588.5 233 591L233 581.6C238 579.3 247 572.5 253.8 564.8Z"/><path transform="translate(110.2 0)" d="M260 565L260 635L250.8 635L250.8 580C248 582.5 238 588.5 233 591L233 581.6C238 579.3 247 572.5 253.8 564.8Z"/><path transform="translate(220.3 0)" d="M260 565L260 635L250.8 635L250.8 580C248 582.5 238 588.5 233 591L233 581.6C238 579.3 247 572.5 253.8 564.8Z"/></g></svg>

</body></html>
